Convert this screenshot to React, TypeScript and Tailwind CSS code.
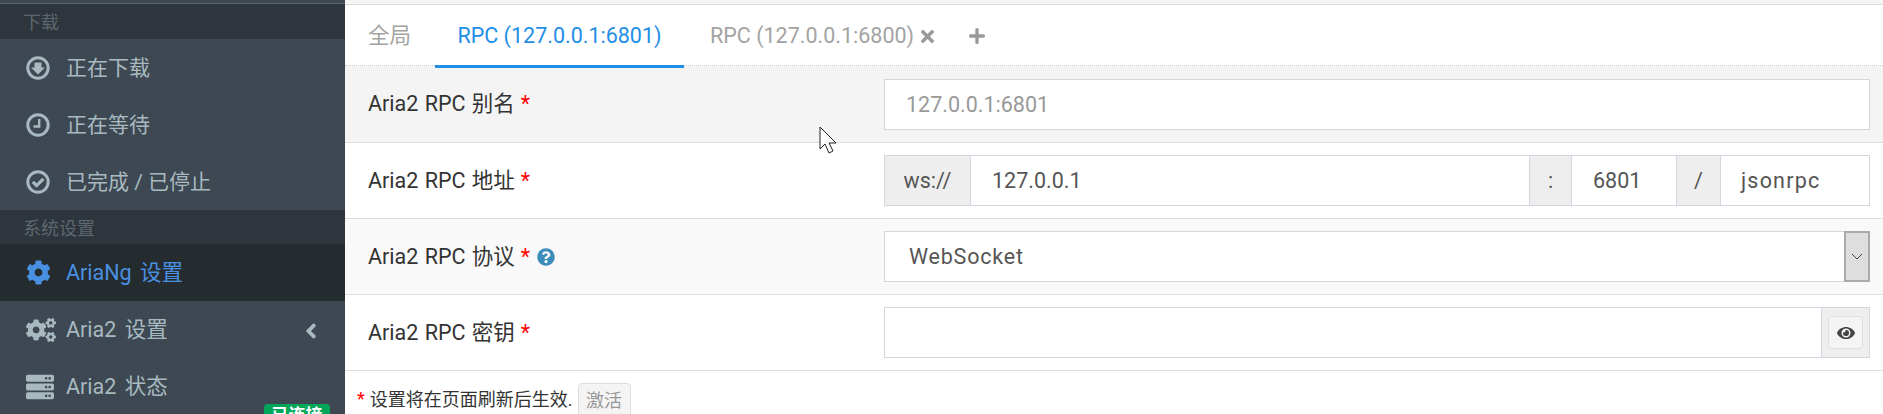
import React from "react";
import { FaCog, FaCogs, FaServer, FaQuestionCircle, FaEye, FaTimes, FaPlus, FaAngleLeft } from "react-icons/fa";

const font = { fontFamily: '"Roboto", "Noto Sans CJK SC", sans-serif' };

function RingIcon({ children }: { children: React.ReactNode }) {
  return (
    <svg width="24" height="24" viewBox="0 0 24 24" fill="none">
      <circle cx="12" cy="12" r="10.2" stroke="currentColor" strokeWidth="3" />
      {children}
    </svg>
  );
}

function Header({ text, className }: { text: string; className: string }) {
  return <div className={`flex items-center pl-[23px] pt-[2px] text-[18px] text-[#5d686e] bg-[#2e353c] ${className}`}>{text}</div>;
}

function Item({ icon, text, active, latin, children }: { icon: React.ReactNode; text: string; active?: boolean; latin?: boolean; children?: React.ReactNode }) {
  return (
    <div className={`relative flex items-center h-[57px] shrink-0 pl-[26px] ${latin ? "text-[21.5px] [word-spacing:3px]" : "text-[21px]"} ${active ? "bg-[#252c2f] text-[#4a90e2]" : "text-[#a8bac0]"}`}>
      <span className="w-[40px] flex items-center text-[24px]">{icon}</span>
      <span className="pt-[2px]">{text}</span>
      {children}
    </div>
  );
}

function Star() {
  return <span className="text-[#ff0000] ml-[6px]">*</span>;
}

function Row({ label, bg, children, extra, h }: { label: string; bg: string; children: React.ReactNode; extra?: React.ReactNode; h: string }) {
  return (
    <div className={`flex items-center border-b border-[#dddddd] pl-[23px] pr-[13px] ${bg} ${h}`}>
      <div className="w-[516px] flex items-center pt-[1px] text-[21.5px] text-[#333333] [word-spacing:1px]">
        {label}
        <Star />
        {extra}
      </div>
      <div className="flex-1 h-[51px] flex border border-[#d2d6de] bg-white text-[21.5px] text-[#555555]">{children}</div>
    </div>
  );
}

function Addon({ text, className }: { text: React.ReactNode; className: string }) {
  return <div className={`flex items-center justify-center bg-[#eeeeee] border-[#d2d6de] ${className}`}>{text}</div>;
}

export default function App() {
  return (
    <div className="w-[1883px] h-[414px] overflow-hidden flex bg-white" style={font}>
      <aside className="w-[345px] h-[414px] shrink-0 flex flex-col bg-[#3d4852] overflow-hidden">
        <div className="h-[4px] shrink-0 border-b border-[#5c6770]" />
        <Header text="下载" className="h-[35px] shrink-0" />
        <Item
          icon={
            <RingIcon>
              <path d="M8.5 6.5h7v5h3.5L12 18.5 5 11.500h3.500z" fill="currentColor" />
            </RingIcon>
          }
          text="正在下载"
        />
        <Item
          icon={
            <RingIcon>
              <path d="M13.200 6v7.500H7.500" stroke="currentColor" strokeWidth="2.400" />
            </RingIcon>
          }
          text="正在等待"
        />
        <Item
          icon={
            <RingIcon>
              <path d="M6.800 11.800l3.800 3.800 6.800-6.800" stroke="currentColor" strokeWidth="3.200" />
            </RingIcon>
          }
          text="已完成 / 已停止"
        />
        <Header text="系统设置" className="h-[34px] shrink-0" />
        <Item latin icon={<FaCog className="text-[25px]" />} text="AriaNg 设置" active />
        <Item latin icon={<FaCogs className="text-[30px]" />} text="Aria2 设置">
          <FaAngleLeft className="absolute left-[299px] text-[24px] top-[18px]" />
        </Item>
        <Item latin icon={<FaServer className="text-[28px]" />} text="Aria2 状态">
          <div className="absolute left-[264px] top-[46px] w-[66px] h-[24px] rounded-[4px] bg-[#00a65a] text-white text-[17px] font-bold flex items-start justify-center leading-[22px] [word-spacing:0]">已连接</div>
        </Item>
      </aside>
      <main className="relative flex-1 min-w-0 flex flex-col">
        <div className="h-[5px] shrink-0 bg-[#f5f5f5] border-b border-[#dddddd]" />
        <div className="h-[61px] shrink-0 flex items-stretch border-b border-dotted border-[#cccccc] text-[21.5px] text-[#a3a3a3]">
          <div className="pl-[23px] pt-[2px] w-[90px] flex items-center">全局</div>
          <div className="relative z-10 w-[249px] -mb-[3px] pt-[2px] flex items-center justify-center border-b-[3px] border-[#1e8ee6] text-[#1e8ee6]">RPC (127.0.0.1:6801)</div>
          <div className="pl-[26px] pt-[2px] flex items-center">
            RPC (127.0.0.1:6800)
            <FaTimes className="ml-[4px] text-[19px] text-[#999999]" />
            <FaPlus className="ml-[31px] text-[18px] text-[#999999]" />
          </div>
        </div>
        <Row label="Aria2 RPC 别名" bg="bg-[#f4f4f4]" h="h-[77px] shrink-0">
          <div className="flex items-center pl-[21px] pt-[2px] text-[#999999]">127.0.0.1:6801</div>
        </Row>
        <Row label="Aria2 RPC 地址" bg="bg-white" h="h-[76px] shrink-0">
          <Addon text="ws://" className="w-[86px] border-r pt-[1px]" />
          <div className="w-[558px] flex items-center pl-[21px] pt-[1px]">127.0.0.1</div>
          <Addon text=":" className="w-[43px] border-x pt-[1px]" />
          <div className="w-[104px] flex items-center pl-[21px] pt-[1px]">6801</div>
          <Addon text="/" className="w-[45px] border-x pt-[1px]" />
          <div className="flex-1 flex items-center pl-[20px] pt-[1px] tracking-[1.2px]">jsonrpc</div>
        </Row>
        <Row label="Aria2 RPC 协议" bg="bg-[#f9f9f9]" h="h-[76px] shrink-0" extra={<FaQuestionCircle className="ml-[7px] text-[18px] text-[#3c8dbc]" />}>
          <div className="flex-1 flex items-center pl-[24px] pt-[1px] tracking-[0.8px]">WebSocket</div>
          <div className="w-[26px] -my-px -mr-px flex items-center justify-center bg-[#dedede] border-2 border-[#aaaaaa]">
            <svg width="12" height="7" viewBox="0 0 12 7" fill="none" stroke="#444444" strokeWidth="1"><path d="M1 1l5 5 5-5" /></svg>
          </div>
        </Row>
        <Row label="Aria2 RPC 密钥" bg="bg-white" h="h-[76px] shrink-0">
          <div className="flex-1" />
          <Addon
            text={
              <div className="w-[35px] h-[33px] flex items-center justify-center rounded-[4px] border border-[#e0e0e0] bg-[#f4f4f4] text-[#444444] text-[18px]">
                <FaEye />
              </div>
            }
            className="w-[48px] border-l"
          />
        </Row>
        <div className="flex items-center pl-[12px] pt-[12px] text-[18px] text-[#333333]">
          <span className="text-[#ff0000] mr-[5px] pb-[4px]">*</span>
          <span className="pb-[2px]">设置将在页面刷新后生效.</span>
          <div className="ml-[5px] w-[53px] h-[34px] flex items-center justify-center rounded-[4px] border border-[#dddddd] bg-[#f4f4f4] text-[#999999] text-[18px]">激活</div>
        </div>
        <svg className="absolute left-[474px] top-[126px]" width="19" height="28" viewBox="0 0 19 28">
          <path d="M1 1v22l5-5 4 9 4-2-4-8h7z" fill="#ffffff" stroke="#222222" strokeWidth="1" />
        </svg>
      </main>
    </div>
  );
}
